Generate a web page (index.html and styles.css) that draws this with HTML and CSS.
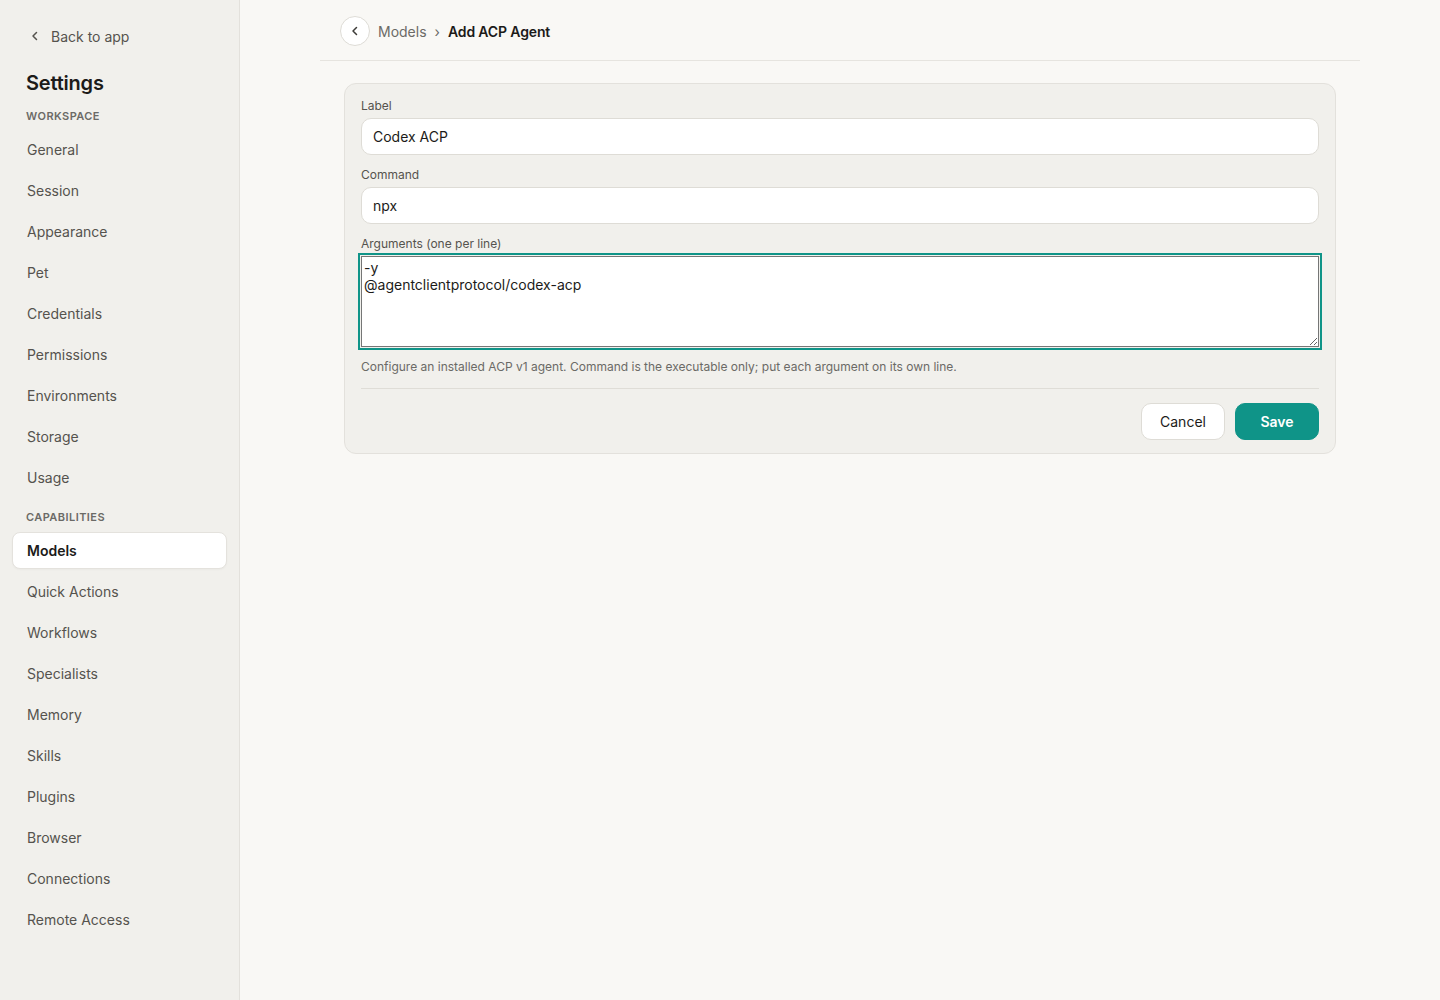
FILE: index.html
```html
<!DOCTYPE html>
<html lang="en">
<head>
	<meta charset="UTF-8">
	<meta name="viewport" content="width=device-width, initial-scale=1.0">
	<title>Settings - Add ACP Agent</title>
	<link rel="stylesheet" href="styles.css">
</head>
<body>
	<div class="app">
		<aside class="sidebar">
			<a class="sidebar__back" href="#">
				<svg width="14" height="14" viewBox="0 0 14 14" fill="none" stroke="currentColor" stroke-width="1.5" stroke-linecap="round" stroke-linejoin="round"><path d="M8.5 3.5 5 7l3.5 3.5"/></svg>
				<span>Back to app</span>
			</a>
			<h1 class="sidebar__title">Settings</h1>

			<div class="sidebar__section">Workspace</div>
			<nav class="sidebar__nav">
				<a class="nav-item" href="#">General</a>
				<a class="nav-item" href="#">Session</a>
				<a class="nav-item" href="#">Appearance</a>
				<a class="nav-item" href="#">Pet</a>
				<a class="nav-item" href="#">Credentials</a>
				<a class="nav-item" href="#">Permissions</a>
				<a class="nav-item" href="#">Environments</a>
				<a class="nav-item" href="#">Storage</a>
				<a class="nav-item" href="#">Usage</a>
			</nav>

			<div class="sidebar__section">Capabilities</div>
			<nav class="sidebar__nav">
				<a class="nav-item nav-item--active" href="#">Models</a>
				<a class="nav-item" href="#">Quick Actions</a>
				<a class="nav-item" href="#">Workflows</a>
				<a class="nav-item" href="#">Specialists</a>
				<a class="nav-item" href="#">Memory</a>
				<a class="nav-item" href="#">Skills</a>
				<a class="nav-item" href="#">Plugins</a>
				<a class="nav-item" href="#">Browser</a>
				<a class="nav-item" href="#">Connections</a>
				<a class="nav-item" href="#">Remote Access</a>
			</nav>
		</aside>

		<main class="main">
			<div class="main__inner">
				<header class="crumbs">
					<button class="crumbs__back" type="button" aria-label="Back">
						<svg width="14" height="14" viewBox="0 0 14 14" fill="none" stroke="currentColor" stroke-width="1.5" stroke-linecap="round" stroke-linejoin="round"><path d="M8.5 3.5 5 7l3.5 3.5"/></svg>
					</button>
					<span class="crumbs__link">Models</span>
					<span class="crumbs__sep">›</span>
					<span class="crumbs__current">Add ACP Agent</span>
				</header>

				<form class="card">
					<label class="field__label" for="label">Label</label>
					<input class="field__input" id="label" type="text" value="Codex ACP">

					<label class="field__label" for="command">Command</label>
					<input class="field__input" id="command" type="text" value="npx">

					<label class="field__label" for="args">Arguments (one per line)</label>
					<textarea class="field__textarea" id="args" rows="5">-y
@agentclientprotocol/codex-acp</textarea>

					<p class="card__hint">Configure an installed ACP v1 agent. Command is the executable only; put each argument on its own line.</p>

					<div class="card__actions">
						<button class="btn" type="button">Cancel</button>
						<button class="btn btn--primary" type="button">Save</button>
					</div>
				</form>
			</div>
		</main>
	</div>
</body>
</html>
```

FILE: styles.css
```css
*{
	box-sizing: border-box;
}
html, body{
	margin: 0;
	height: 100%;
}
body{
	font-family: Inter, "Liberation Sans", sans-serif;
	font-size: 14px;
	color: #1c1b19;
	background: #f9f8f5;
}
a{
	text-decoration: none;
	color: inherit;
}
.app{
	display: grid;
	grid-template-columns: 240px 1fr;
	min-height: 100vh;
}

/* sidebar */
.sidebar{
	background: #f1f0ec;
	border-right: 1px solid #e3e1dc;
	padding: 19px 12px 20px;
}
.sidebar__back{
	display: flex;
	align-items: center;
	gap: 9px;
	height: 34px;
	padding: 0 16px;
	color: #55534e;
	font-size: 14px;
}
.sidebar__title{
	margin: 16px 14px 0;
	font-size: 20px;
	line-height: 28px;
	font-weight: 600;
	letter-spacing: -0.01em;
}
.sidebar__section{
	margin: 11px 14px 7px;
	font-size: 11px;
	line-height: 16px;
	font-weight: 600;
	letter-spacing: 0.04em;
	text-transform: uppercase;
	color: #6b6a66;
}
.sidebar__nav{
	display: flex;
	flex-direction: column;
	gap: 4px;
}
.sidebar__nav + .sidebar__section{
	margin-top: 13px;
}
.nav-item{
	display: flex;
	align-items: center;
	height: 37px;
	padding: 0 14px;
	border: 1px solid transparent;
	border-radius: 8px;
	color: #55534e;
}
.nav-item--active{
	background: #fff;
	border-color: #e4e2dd;
	color: #1c1b19;
	font-weight: 600;
	box-shadow: 0 1px 2px rgba(0, 0, 0, 0.03);
}

/* main */
.main__inner{
	max-width: 1040px;
	margin: 0 auto;
}
.crumbs{
	display: flex;
	align-items: center;
	gap: 8px;
	height: 61px;
	padding: 2px 20px 0;
	border-bottom: 1px solid #e6e4df;
}
.crumbs__back{
	display: flex;
	align-items: center;
	justify-content: center;
	width: 30px;
	height: 30px;
	padding: 0;
	border: 1px solid #dedcd6;
	border-radius: 50%;
	background: #fff;
	color: #3d3c38;
	cursor: pointer;
}
.crumbs__link{
	color: #6b6a66;
}
.crumbs__sep{
	color: #6b6a66;
	font-size: 14px;
}
.crumbs__current{
	font-weight: 600;
	letter-spacing: -0.01em;
}

.card{
	display: flex;
	flex-direction: column;
	margin: 22px 24px;
	padding: 14px 16px 13px;
	background: #f1f0ec;
	border: 1px solid #e3e1dc;
	border-radius: 12px;
}
.field__label{
	font-size: 12px;
	line-height: 16px;
	color: #55534e;
	margin-bottom: 4px;
}
.field__input{
	height: 37px;
	margin-bottom: 12px;
	padding: 0 11px;
	border: 1px solid #dedcd6;
	border-radius: 10px;
	background: #fff;
	font-family: inherit;
	font-size: 14px;
	color: #1c1b19;
}
.field__textarea{
	padding: 2px;
	font-family: inherit;
	font-size: 14px;
	line-height: 17px;
	color: #1c1b19;
	background: #fff;
	border: 1px solid #767676;
	outline: 2px solid #0f9488;
	outline-offset: 1px;
	resize: vertical;
}
.card__hint{
	margin: 12px 0 0;
	font-size: 12px;
	line-height: 16px;
	color: #6b6a66;
}
.card__actions{
	display: flex;
	justify-content: flex-end;
	gap: 10px;
	margin-top: 13px;
	padding-top: 14px;
	border-top: 1px solid #dfddd7;
}
.btn{
	width: 84px;
	height: 37px;
	border: 1px solid #dedcd6;
	border-radius: 10px;
	background: #fff;
	font-family: inherit;
	font-size: 14px;
	color: #1c1b19;
	cursor: pointer;
}
.btn--primary{
	background: #0f9488;
	border-color: #0f9488;
	color: #fff;
	font-weight: 600;
}
```
